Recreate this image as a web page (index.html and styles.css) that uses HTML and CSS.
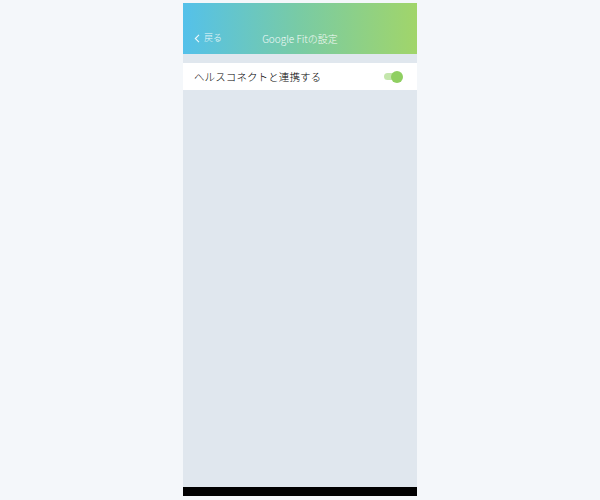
FILE: index.html
```html
<!DOCTYPE html>
<html lang="ja">
<head>
<meta charset="utf-8">
<link rel="stylesheet" href="styles.css">
</head>
<body>
<div class="phone">
  <header class="header">
    <div class="back">
      <svg class="chev" width="6" height="9" viewBox="0 0 6 9"><path d="M5 0.8 L1.3 4.5 L5 8.2" fill="none" stroke="#fff" stroke-width="1.1"/></svg>
      <span>戻る</span>
    </div>
    <div class="title">Google Fitの設定</div>
  </header>
  <div class="content">
    <div class="row">
      <span class="label">ヘルスコネクトと連携する</span>
      <span class="toggle"><span class="knob"></span></span>
    </div>
  </div>
  <div class="navbar"></div>
</div>
</body>
</html>
```
FILE: styles.css
```css
html, body { margin: 0; padding: 0; }
body {
  background: #f4f7fa;
  width: 600px;
  height: 500px;
  font-family: "Noto Sans CJK JP", "Noto Sans", sans-serif;
  font-weight: 300;
  overflow: hidden;
}
.phone {
  margin: 3px 0 0 183px;
  width: 234px;
  height: 493px;
  display: flex;
  flex-direction: column;
  background: #e0e7ee;
}
.header {
  height: 51px;
  background: linear-gradient(90deg, #54c1ea 0%, #79cba4 50%, #a1d56a 100%);
  display: flex;
  align-items: flex-end;
  padding-bottom: 10px;
  box-sizing: border-box;
  position: relative;
  color: #fff;
}
.back {
  display: flex;
  align-items: center;
  gap: 4px;
  margin-left: 11px;
  font-size: 9px;
  line-height: 12px;
  opacity: 0.9;
}
.title {
  position: absolute;
  left: 0; right: 0;
  bottom: 8px;
  text-align: center;
  font-size: 10px;
  line-height: 14px;
  opacity: 0.92;
}
.content { flex: 1; padding-top: 9px; }
.row {
  background: #fff;
  height: 27px;
  display: flex;
  align-items: center;
  justify-content: space-between;
  padding: 0 16px 0 11px;
}
.label {
  font-size: 10.5px;
  color: #000;
  letter-spacing: 0.1px;
}
.toggle {
  position: relative;
  width: 17px;
  height: 7px;
  border-radius: 4px;
  background: #c4e6ac;
}
.knob {
  position: absolute;
  right: -2px;
  top: -2.5px;
  width: 12px;
  height: 12px;
  border-radius: 50%;
  background: #8fcf61;
}
.navbar { height: 9px; background: #000; }
```
